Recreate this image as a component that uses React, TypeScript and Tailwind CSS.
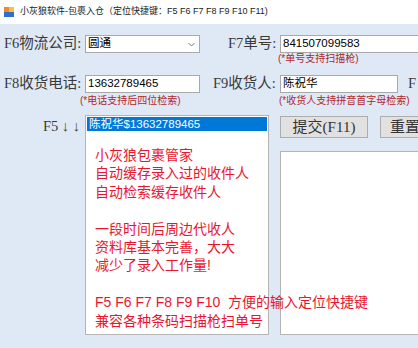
import React from "react";

const serif = "font-['Liberation_Serif','Noto_Sans_CJK_SC',serif]";
const sans = "font-['Liberation_Sans','Noto_Sans_CJK_SC',sans-serif]";

const notes = [
  "小灰狼包裹管家",
  "自动缓存录入过的收件人",
  "自动检索缓存收件人",
  "",
  "一段时间后周边代收人",
  "资料库基本完善，大大",
  "减少了录入工作量!",
  "",
  "F5 F6 F7 F8 F9 F10  方便的输入定位快捷键",
  "兼容各种条码扫描枪扫单号",
];

function AppIcon() {
  return (
    <svg width="10" height="10" viewBox="0 0 10 10">
      <rect x="0" y="0" width="5" height="5" fill="#f08a24" />
      <rect x="5" y="0" width="5" height="5" fill="#f6c243" />
      <rect x="0" y="5" width="10" height="5" fill="#2f6fd0" />
    </svg>
  );
}

export default function App() {
  return (
    <div className={`w-[418px] h-[348px] overflow-hidden bg-[#dfe9f6] ${sans}`}>
      {/* title bar */}
      <div className="h-[24px] bg-white flex items-center pl-[4px]">
        <AppIcon />
        <span className="ml-[6px] text-[9px] text-[#222] whitespace-nowrap">
          小灰狼软件-包裹入仓（定位快捷键：F5 F6 F7 F8 F9 F10 F11)
        </span>
      </div>

      {/* row 1 */}
      <div className="mt-[11px] flex items-center h-[18px] whitespace-nowrap">
        <div className={`w-[85px] shrink-0 pl-[4px] text-[14.5px] text-[#3a3a3a] ${serif}`}>F6物流公司:</div>
        <div className="w-[115px] h-[18px] shrink-0 border border-[#a9a9a9] bg-white flex items-center justify-between pl-[2px] pr-[4px]">
          <span className="text-[11.5px] text-black leading-none">圆通</span>
          <svg width="7" height="5" viewBox="0 0 7 5">
            <path d="M0.5 1 L3.5 4 L6.5 1" fill="none" stroke="#777" strokeWidth="1" />
          </svg>
        </div>
        <div className={`ml-[28px] w-[52px] shrink-0 text-[14.5px] text-[#3a3a3a] ${serif}`}>F7单号:</div>
        <div className="w-[150px] h-[18px] shrink-0 border border-[#a9a9a9] bg-white flex items-center pl-[2px] text-[11.5px] text-black">
          841507099583
        </div>
      </div>
      <div className="ml-[278px] text-[10px] leading-[12px] text-[#b0262b] whitespace-nowrap">(*单号支持扫描枪)</div>

      {/* row 2 */}
      <div className="mt-[10px] flex items-center h-[18px] whitespace-nowrap">
        <div className={`w-[85px] shrink-0 pl-[4px] text-[14.5px] text-[#3a3a3a] ${serif}`}>F8收货电话:</div>
        <div className="w-[115px] h-[18px] shrink-0 border border-[#a9a9a9] bg-white flex items-center pl-[2px] text-[11.5px] text-black">
          13632789465
        </div>
        <div className={`ml-[13px] w-[67px] shrink-0 text-[14.5px] text-[#3a3a3a] ${serif}`}>F9收货人:</div>
        <div className="w-[118px] h-[18px] shrink-0 border border-[#a9a9a9] bg-white flex items-center pl-[2px] text-[11.5px] text-black">
          陈祝华
        </div>
        <div className={`ml-[10px] shrink-0 text-[14.5px] text-[#3a3a3a] ${serif}`}>F</div>
      </div>
      <div className="mt-[2px] flex text-[10px] leading-[12px] text-[#b0262b] whitespace-nowrap">
        <div className="ml-[80px] w-[199px] shrink-0">(*电话支持后四位检索)</div>
        <div className="shrink-0">(*收货人支持拼音首字母检索)</div>
      </div>

      {/* row 3 */}
      <div className="mt-[8px] flex items-start whitespace-nowrap">
        <div className={`w-[85px] shrink-0 pr-[5px] pt-[1px] text-right text-[14.5px] text-[#3a3a3a] ${serif}`}>F5 ↓ ↓</div>

        <div className="relative z-10 w-[184px] h-[220px] border border-[#b4b4b4] bg-white shrink-0">
          <div className="mx-px mt-px h-[14px] bg-[#0078d7] pl-[2px] text-[11.5px] leading-[14px] text-white">
            陈祝华$13632789465
          </div>
          <div className="mt-[15px] pl-[9px] text-[14px] leading-[18.4px] text-[#e8162f] whitespace-pre">
            {notes.map((line, i) => (
              <div key={i} className="h-[18.4px]">{line}</div>
            ))}
          </div>
        </div>

        <div className="ml-[11px] shrink-0 flex flex-col">
          <div className="mt-px flex gap-[12px]">
            <button className={`w-[88px] h-[22px] shrink-0 border border-[#adadad] bg-[#e1e1e1] text-[15px] leading-none text-[#333] ${serif}`}>
              提交(F11)
            </button>
            <button className={`w-[60px] h-[22px] shrink-0 border border-[#adadad] bg-[#e1e1e1] text-[15px] leading-none text-[#333] pr-[10px] ${serif}`}>
              重置
            </button>
          </div>
          <div className="mt-[13px] w-[150px] h-[184px] border border-[#b4b4b4] bg-white" />
        </div>
      </div>
    </div>
  );
}
